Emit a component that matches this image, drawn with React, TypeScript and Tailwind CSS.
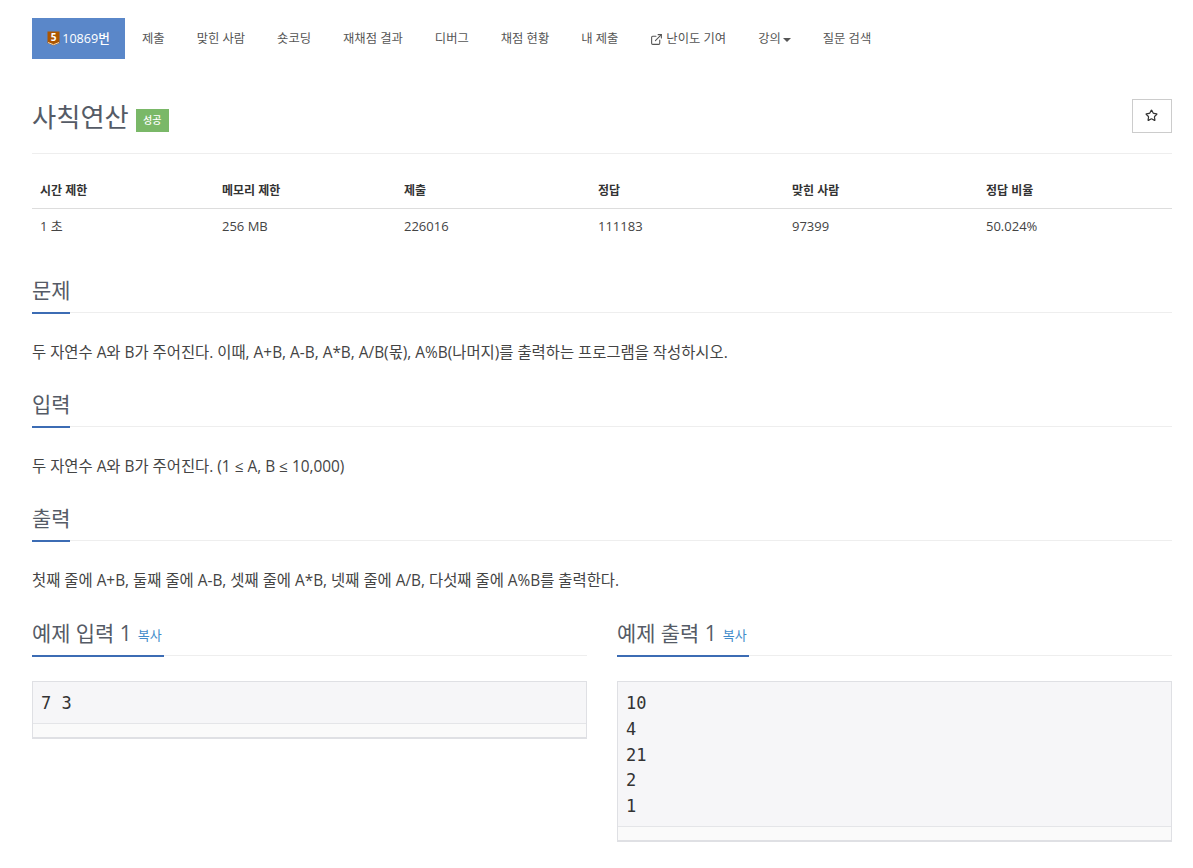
import { ExternalLink, Star } from 'lucide-react'

const navItems = ['제출', '맞힌 사람', '숏코딩', '재채점 결과', '디버그', '채점 현황', '내 제출']

const stats = [
  { label: '시간 제한', value: '1 초', width: 'w-[182px]' },
  { label: '메모리 제한', value: '256 MB', width: 'w-[182px]' },
  { label: '제출', value: '226016', width: 'w-[194px]' },
  { label: '정답', value: '111183', width: 'w-[194px]' },
  { label: '맞힌 사람', value: '97399', width: 'w-[194px]' },
  { label: '정답 비율', value: '50.024%', width: 'w-[194px]' },
]

const sections = [
  {
    title: '문제',
    body: '두 자연수 A와 B가 주어진다. 이때, A+B, A-B, A*B, A/B(몫), A%B(나머지)를 출력하는 프로그램을 작성하시오.',
  },
  { title: '입력', body: '두 자연수 A와 B가 주어진다. (1 ≤ A, B ≤ 10,000)' },
  {
    title: '출력',
    body: '첫째 줄에 A+B, 둘째 줄에 A-B, 셋째 줄에 A*B, 넷째 줄에 A/B, 다섯째 줄에 A%B를 출력한다.',
  },
]

function TierBadge() {
  return (
    <svg width="13" height="15" viewBox="0 0 13 15" className="shrink-0">
      <path d="M0.5 0.5h12v11.5l-6 2.5-6-2.5z" fill="#ad5600" />
      <path d="M1 11.5l5.5 2.2 5.5-2.2" fill="none" stroke="#f3d9b5" strokeWidth="1" />
      <text x="6.5" y="9.5" textAnchor="middle" fontSize="10" fontWeight="700" fill="#fff" fontFamily="'Open Sans', sans-serif">
        5
      </text>
    </svg>
  )
}

function Heading({ title, children }: { title: string; children?: React.ReactNode }) {
  return (
    <div className="h-[37px] border-b border-[#eeeeee]">
      <div className="inline-flex h-[38px] items-start gap-[6px] border-b-2 border-[#3c6cb4]">
        <h2 className="text-[20.9px] leading-[28px] font-normal text-[#555b66]">{title}</h2>
        {children}
      </div>
    </div>
  )
}

function SampleBox({ title, lines }: { title: string; lines: string[] }) {
  return (
    <div>
      <Heading title={title}>
        <span className="mt-[7px] pr-[2px] text-[13px] leading-[18px] text-[#428bca]">복사</span>
      </Heading>
      <div className="mt-[25px] border border-[#dfe0e4] border-b-2 bg-[#fafafa]">
        <pre className="border-b border-[#e4e5e8] bg-[#f6f6f8] px-2 pt-[9px] pb-[6px] font-['DejaVu_Sans_Mono',monospace] text-[17px] leading-[25.8px] text-[#333333]">
          {lines.join('\n')}
        </pre>
        <div className="h-[13px]" />
      </div>
    </div>
  )
}

export default function App() {
  return (
    <div className="min-h-[868px] bg-white pt-[18px] pl-[32px] font-['Open_Sans','Noto_Sans_CJK_KR',sans-serif] text-[14px] text-[#333333]">
      <div className="w-[1140px]">
        <nav className="flex h-[41px] items-center text-[12.3px] leading-[20px] text-[#555555]">
          <a className="mr-[1px] flex h-full w-[93px] items-center justify-center gap-[2px] bg-[#5a87c9] text-[12.6px] font-medium text-white">
            <TierBadge />
            10869번
          </a>
          {navItems.map((item) => (
            <a key={item} className="px-4 pt-[1px]">
              {item}
            </a>
          ))}
          <a className="flex items-center gap-[3px] px-4 pt-[1px]">
            <ExternalLink size={13} strokeWidth={2} />
            난이도 기여
          </a>
          <a className="flex items-center gap-[2px] px-4 pt-[1px]">
            강의
            <span className="mt-[1px] h-0 w-0 border-x-[4px] border-t-[4px] border-x-transparent border-t-[#555555]" />
          </a>
          <a className="px-4 pt-[1px]">질문 검색</a>
        </nav>

        <div className="mt-[40px] flex h-[55px] items-start justify-between border-b border-[#eeeeee]">
          <div className="flex items-center gap-[7px]">
            <h1 className="text-[26.3px] leading-[36px] font-normal text-[#555b66]">사칙연산</h1>
            <span className="mt-[6px] flex h-[23px] w-[33px] items-center justify-center bg-[#7ab868] text-[10px] font-medium text-white">
              성공
            </span>
          </div>
          <button type="button" className="flex h-[34px] w-[40px] items-center justify-center border border-[#cccccc] pr-[1px] pb-[1px] text-[#333333]">
            <Star size={13} strokeWidth={2.2} />
          </button>
        </div>

        <table className="mt-[20px] w-full text-left text-[13px]">
          <thead>
            <tr className="border-b border-[#dddddd]">
              {stats.map((stat) => (
                <th key={stat.label} className={`${stat.width} h-[34px] px-2 text-[12px] font-bold text-[#333333]`}>
                  {stat.label}
                </th>
              ))}
            </tr>
          </thead>
          <tbody>
            <tr>
              {stats.map((stat) => (
                <td key={stat.label} className="h-[36px] px-2 text-[#444444]">
                  {stat.value}
                </td>
              ))}
            </tr>
          </tbody>
        </table>

        <div className="mt-[32px] flex flex-col gap-[24px]">
          {sections.map((section) => (
            <section key={section.title}>
              <Heading title={section.title} />
              <p className="mt-[27px] text-[15.4px] leading-[26px] text-[#444444]">{section.body}</p>
            </section>
          ))}
        </div>

        <div className="mt-[25px] grid grid-cols-[555px_555px] gap-[30px]">
          <SampleBox title="예제 입력 1" lines={['7 3']} />
          <SampleBox title="예제 출력 1" lines={['10', '4', '21', '2', '1']} />
        </div>
      </div>
    </div>
  )
}
